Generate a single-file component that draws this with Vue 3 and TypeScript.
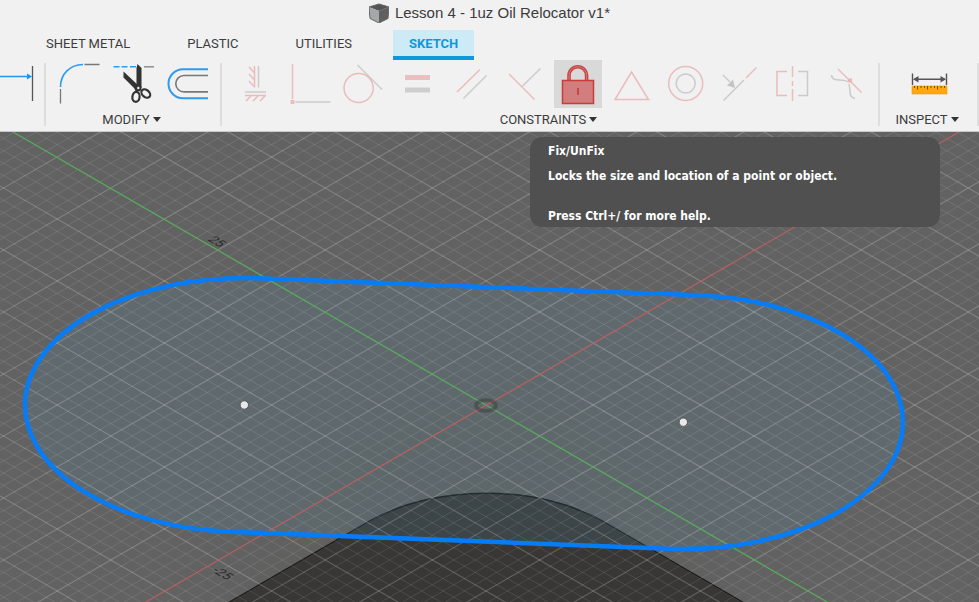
<script setup lang="ts">
interface Line { x1: number; y1: number; x2: number; y2: number }

const origin = { x: 486, y: 273 }
const cell = { w: 107.2, h: 62 }
const slope = cell.h / cell.w
const divisions = 5

const tabs = ['SHEET METAL', 'PLASTIC', 'UTILITIES', 'SKETCH']
const activeTab = 'SKETCH'

const slot = 'M258.700 146.300 697.700 163.300A219.500 127 0 0 1 903 290A219.500 127 0 0 1 668.300 416.700L229.300 399.700A219.500 127 0 0 1 25 273A219.500 127 0 0 1 258.700 146.300Z'

// Lines of both grid directions, extended across the whole drawing.
function gridLines(major: boolean): Line[] {
  const lines: Line[] = []
  for (let i = -90; i <= 90; i++) {
    if (i === 0 || (i % divisions === 0) !== major) continue
    const y = origin.y + (i * cell.h) / divisions
    for (const s of [slope, -slope]) {
      lines.push({ x1: 0, y1: y - origin.x * s, x2: 979, y2: y + (979 - origin.x) * s })
    }
  }
  return lines
}

const minorLines = gridLines(false)
const majorLines = gridLines(true)
</script>

<template>
  <div class="app">
    <header class="ribbon">
      <div class="title">
        <svg class="cube" viewBox="0 0 20 20" aria-hidden="true">
          <path d="M0 4 10 1 20 4 10 8Z" fill="#555" />
          <path d="M0 4 10 8V20L1 15.500Z" fill="#a5a8a8" />
          <path d="M20 4 10 8V20L19 15.500Z" fill="#5f5f5f" />
          <path d="M0 4 10 1 20 4 19 15.500 10 20 1 15.500Z" fill="none" stroke="#666" />
        </svg>
        <span>Lesson 4 - 1uz Oil Relocator v1*</span>
      </div>

      <nav class="tabs">
        <button v-for="tab in tabs" :key="tab" type="button" class="tab" :class="{ active: tab === activeTab }">{{ tab }}</button>
      </nav>

      <div class="toolbar">
        <section class="group create">
          <div class="tools">
            <button type="button" class="tool" aria-label="Dimension">
              <svg viewBox="0 0 48 48">
                <path d="M0 16.500H32" stroke="#1e96f0" stroke-width="1.500" />
                <path d="M31 13.500 36 16.500 31 19.500Z" fill="#1e96f0" />
                <path d="M36.500 6V41" stroke="#555" stroke-width="1.300" />
              </svg>
            </button>
          </div>
        </section>
        <span class="sep"></span>

        <section class="group modify">
          <div class="tools">
            <button type="button" class="tool" aria-label="Fillet">
              <svg viewBox="0 0 48 48" fill="none">
                <path d="M6.500 27C6.500 14 16 4.500 29 4.500" stroke="#2d9bf0" stroke-width="1.600" />
                <path d="M6.500 29V43.500M30.500 4.500H45.500" stroke="#777" stroke-width="1.300" />
              </svg>
            </button>
            <button type="button" class="tool" aria-label="Trim">
              <svg viewBox="0 0 48 48" fill="none">
                <path d="M4.500 6.800H10.500M12.500 6.800H18.500M21 6.800H27" stroke="#2d9bf0" stroke-width="1.600" />
                <path d="M35 6.800H45" stroke="#888" stroke-width="1.400" />
                <path d="M14.500 11.500V17.500L27 30 31 27Z" fill="#333" />
                <path d="M27.500 8 28.500 4 32.500 8V28H27.500Z" fill="#333" />
                <circle cx="29" cy="28" r="3.500" fill="#333" /><circle cx="29.300" cy="28" r="1.200" fill="#f1f1f1" />
                <ellipse cx="27" cy="36.800" rx="3.600" ry="5" stroke="#333" stroke-width="2.200" transform="rotate(8 27 36.800)" />
                <ellipse cx="36.800" cy="33.500" rx="3.500" ry="5" stroke="#333" stroke-width="2.200" transform="rotate(-48 36.800 33.500)" />
              </svg>
            </button>
            <button type="button" class="tool" aria-label="Offset">
              <svg viewBox="0 0 48 48" fill="none">
                <path d="M44 9.200H19A14.500 14.500 0 0 0 19 38.200H44" stroke="#2d9bf0" stroke-width="2" />
                <path d="M44 15.500H20A8.200 8.200 0 0 0 20 31.900H44" stroke="#777" stroke-width="1.600" />
              </svg>
            </button>
          </div>
          <button type="button" class="menu">MODIFY<i class="caret"></i></button>
        </section>
        <span class="sep"></span>

        <section class="group constraints">
          <div class="tools">
            <button type="button" class="tool" aria-label="Horizontal/Vertical">
              <svg viewBox="0 0 48 48" fill="none">
                <path class="r" d="M22.500 6V27.500M17 7 22.500 13M17 14 22.500 20M17 21 22.500 27M13 35.500H34M19 36 14 41M26 36 21 41M33 36 28 41" />
                <path class="g" d="M26.500 6V27.500M13 32H34" />
              </svg>
            </button>
            <button type="button" class="tool" aria-label="Coincident">
              <svg viewBox="0 0 48 48" fill="none">
                <path class="r" d="M6.500 4V39" /><path fill="#eabcbc" d="M4.500 40H8.500V44H4.500Z" />
                <path class="g" d="M9.500 42H44.500" />
              </svg>
            </button>
            <button type="button" class="tool" aria-label="Tangent">
              <svg viewBox="0 0 48 48" fill="none">
                <path class="g" d="M18.500 5 43 29.500" /><circle class="r" cx="19.600" cy="28" r="14.600" />
              </svg>
            </button>
            <button type="button" class="tool" aria-label="Equal">
              <svg viewBox="0 0 48 48">
                <path fill="#e9bfbf" d="M12 15H37V20H12Z" /><path fill="#cecece" d="M12 27.500H37V32.500H12Z" />
              </svg>
            </button>
            <button type="button" class="tool" aria-label="Parallel">
              <svg viewBox="0 0 48 48" fill="none">
                <path class="r" d="M10 32 33 9.500" /><path class="g" d="M16.500 38.500 39.500 15.500" />
              </svg>
            </button>
            <button type="button" class="tool" aria-label="Perpendicular">
              <svg viewBox="0 0 48 48" fill="none">
                <path class="r" d="M9 14 34.500 39.500" /><path class="g" d="M22 26.500 40.500 8.500" />
              </svg>
            </button>
            <button type="button" class="tool hovered" aria-label="Fix/UnFix" aria-describedby="fix-tip">
              <svg viewBox="0 0 48 48" fill="none">
                <path d="M15 20V15.500A8.800 8.800 0 0 1 32.600 15.500V20" stroke="#c94444" stroke-width="3.600" />
                <path d="M15 20V15.500A8.800 8.800 0 0 1 32.600 15.500V20" stroke="#da7777" stroke-width="1" />
                <path d="M8.500 20.500H39.500V43.500H8.500Z" fill="#d27e7e" stroke="#c83c3c" stroke-width="1.500" />
                <path d="M24 28V35" stroke="#b82c2c" stroke-width="1.300" />
              </svg>
            </button>
            <button type="button" class="tool" aria-label="Midpoint">
              <svg viewBox="0 0 48 48" fill="none"><path class="r" d="M24.500 12 41.500 39.500H8Z" /></svg>
            </button>
            <button type="button" class="tool" aria-label="Concentric">
              <svg viewBox="0 0 48 48" fill="none">
                <circle class="r" cx="24.700" cy="23.500" r="17" /><circle class="g" cx="24.700" cy="23.500" r="9.500" />
              </svg>
            </button>
            <button type="button" class="tool" aria-label="Collinear">
              <svg viewBox="0 0 48 48" fill="none">
                <path class="g" d="M8.500 40.500 29 20M8 15 15 22" /><path class="r" d="M31 18 41.500 7.500" />
                <path fill="#c4c4c4" d="M20 28 12 25.500 18 19.500Z" />
              </svg>
            </button>
            <button type="button" class="tool" aria-label="Symmetry">
              <svg viewBox="0 0 48 48" fill="none">
                <path class="r" d="M19 11.500H9V35.500H19M24.500 6V17M24.500 21V26M24.500 29V41" />
                <path class="g" d="M30 11.500H39.500V35.500H30" />
              </svg>
            </button>
            <button type="button" class="tool" aria-label="Curvature">
              <svg viewBox="0 0 48 48" fill="none">
                <path class="g" d="M9.500 15C10 23 20 18 26 22M27 24C29 31 26 37 33 38.500" />
                <path class="r" d="M16 9 39.500 32.500" /><path fill="#eab6b6" d="M26 18.500H30V22.500H26Z" />
              </svg>
            </button>
          </div>
          <button type="button" class="menu">CONSTRAINTS<i class="caret"></i></button>
        </section>
        <span class="sep"></span>

        <section class="group inspect">
          <div class="tools">
            <button type="button" class="tool" aria-label="Measure">
              <svg viewBox="0 0 48 48" fill="none">
                <path d="M7.500 13.500V25M41.500 13.500V25M9 19.200H40" stroke="#555" stroke-width="1.400" />
                <path d="M8 19.200 13.500 16V22.400ZM41 19.200 35.500 16V22.400Z" fill="#555" />
                <path d="M7 26H42V34H7Z" fill="#ffa90a" stroke="#e99a08" stroke-width=".6" />
                <path d="M9.500 26V28M12.500 26V29.500M16 26V28M19.500 26V28M22.500 26V29.500M26 26V28M29.500 26V28M32.500 26V29.500M36 26V28M39.500 26V28" stroke="#6d5010" />
              </svg>
            </button>
          </div>
          <button type="button" class="menu">INSPECT<i class="caret"></i></button>
        </section>
        <span class="sep"></span>
      </div>
    </header>

    <main class="canvas">
      <svg class="scene" viewBox="0 0 979 470" preserveAspectRatio="xMidYMin slice" role="img" aria-label="Sketch canvas">
        <defs>
          <radialGradient id="warm" gradientUnits="userSpaceOnUse" cx="486" cy="470" r="330">
            <stop offset="0" stop-color="#57554e" stop-opacity=".5" />
            <stop offset="1" stop-color="#5d5d5d" stop-opacity="0" />
          </radialGradient>
        </defs>
        <rect width="979" height="470" fill="#626262" />
        <rect width="979" height="470" fill="url(#warm)" />
        <path class="body" d="M228 471 370 389A164 94.600 0 0 1 602 389L744 471Z" />
        <path class="profile" :d="slot" />
        <g class="minor"><line v-for="(l, i) in minorLines" :key="i" v-bind="l" /></g>
        <g class="major"><line v-for="(l, i) in majorLines" :key="i" v-bind="l" /></g>
        <line x1="13" y1="0" x2="828" y2="470.500" stroke="#5aaa5e" stroke-width="1.300" />
        <line x1="145" y1="470.500" x2="959" y2="0" stroke="#b96060" stroke-width="1.200" />
        <g class="label">
          <text transform="matrix(.87 .5 -.87 .5 207 108)">25</text>
          <text transform="matrix(.87 .5 -.87 .5 211 439)">-25</text>
        </g>
        <ellipse cx="486" cy="273.500" rx="10" ry="5.500" fill="none" stroke="#2d3333" stroke-opacity=".4" stroke-width="3.500" />
        <path class="outline" :d="slot" />
        <g class="point"><circle cx="244.300" cy="273" r="4.200" /><circle cx="683.300" cy="290.200" r="4.200" /></g>
      </svg>

      <div id="fix-tip" class="tooltip" role="tooltip">
        <p>Fix/UnFix</p>
        <p class="detail">Locks the size and location of a point or object.</p>
        <p class="help">Press Ctrl+/ for more help.</p>
      </div>
    </main>
  </div>
</template>

<style>
body { margin: 0; }
</style>

<style scoped>
.app {
  display: flex;
  flex-direction: column;
  height: 100vh;
  font-family: Roboto, "Liberation Sans", sans-serif;
  color: #3c3c3c;
}
.ribbon { background: #f1f1f1; border-bottom: 1px solid #c9c9c9; }
.title {
  display: flex;
  align-items: center;
  justify-content: center;
  gap: 6px;
  height: 25px;
  padding-bottom: 5px;
  font: 15px "Liberation Sans", sans-serif;
}
.cube { width: 20px; height: 20px; }
button { border: 0; margin: 0; padding: 0; background: none; color: inherit; font: inherit; }
.tabs { display: flex; gap: 25px; padding-left: 30px; }
.tab {
  height: 30px;
  padding: 0 16px;
  border-bottom: 4px solid transparent;
  font-size: 13px;
  white-space: nowrap;
}
.tab.active { background: #cdeaf7; border-color: #0f98d8; color: #1296d8; font-weight: 700; }
.toolbar { display: flex; height: 71px; }
.sep { flex: none; width: 2px; height: 63px; margin-top: 3px; background: #dedede; }
.group { flex: none; display: flex; flex-direction: column; align-items: center; }
.tools { display: flex; align-self: stretch; justify-content: space-between; }
.create { width: 44px; overflow: hidden; }
.create .tools { justify-content: flex-end; }
.modify { width: 174px; }
.modify .tools { padding: 0 8px; }
.constraints { flex: 1; min-width: 0; }
.constraints .tools { padding: 0 8px 0 10px; }
.inspect { width: 97px; }
.inspect .tools { justify-content: center; }
.tool { flex: none; width: 48px; height: 48px; }
.tool svg { display: block; width: 48px; height: 48px; }
.hovered { background: #d9d9d9; }
.r { stroke: #eabcbc; stroke-width: 1.5; }
.g { stroke: #cbcbcb; stroke-width: 1.5; }
.menu { display: flex; align-items: center; gap: 3px; height: 24px; padding-right: 3px; font-size: 13px; }
.caret { border: 4px solid transparent; border-top: 5px solid #333; border-bottom: 0; }
.canvas { position: relative; flex: 1; min-height: 0; overflow: hidden; background: #626262; }
.scene { display: block; width: 100%; height: 100%; }
.body { fill: #383735; stroke: #191919; stroke-width: 1.5; }
.profile { fill: #559ab4; fill-opacity: .15; }
.minor { stroke: #fff; stroke-opacity: .1; stroke-width: 1; }
.major { stroke: #fff; stroke-opacity: .2; stroke-width: 1.2; }
.label { font-size: 13px; fill: #2d2d2d; }
.outline { fill: none; stroke: #087cf5; stroke-width: 4.6; }
.point { fill: #e8e8e8; stroke: #555; stroke-width: 1; }
.tooltip {
  position: absolute;
  top: 5px;
  left: 530px;
  box-sizing: border-box;
  width: 410px;
  padding: 4px 18px 1px;
  border-radius: 12px;
  background: #505050;
  color: #fff;
  font: 700 12px/20px "DejaVu Sans Condensed", "DejaVu Sans", sans-serif;
}
.tooltip p { margin: 0; }
.tooltip .detail { margin: 5px 0 20px; }
</style>
